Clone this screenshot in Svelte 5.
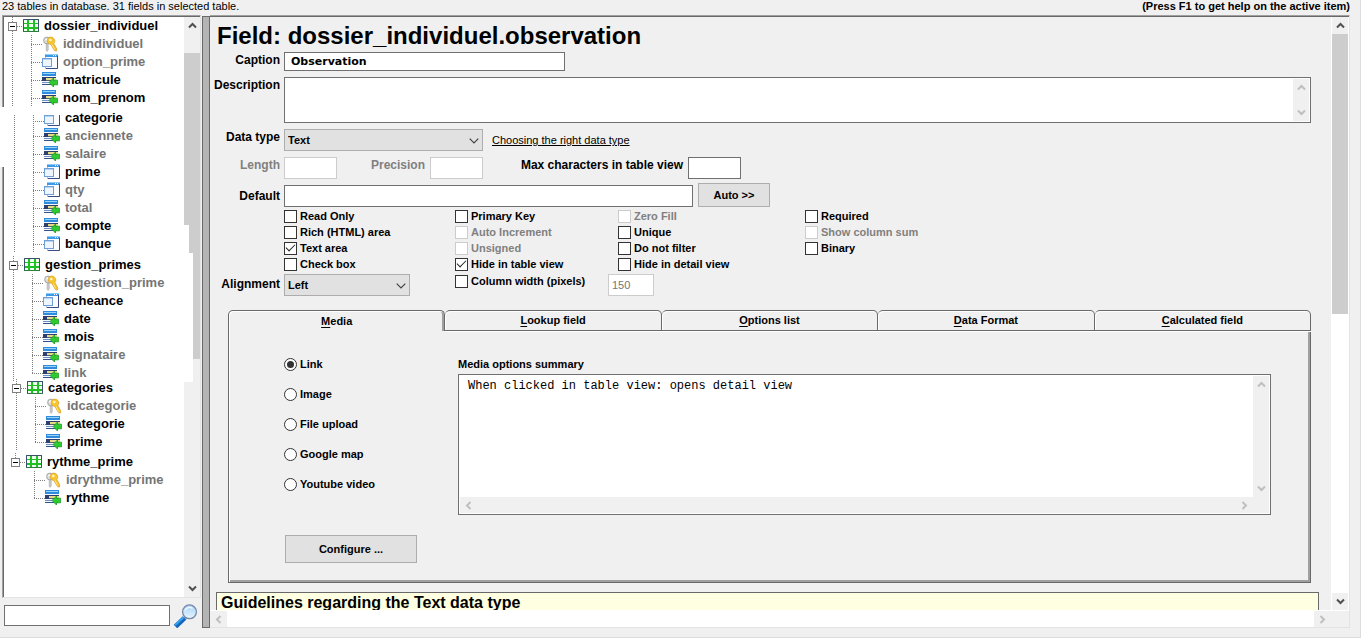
<script>
  // Field tree, in the order it is listed. `indent` shifts a group to the right.
  const groups = [
    {
      name: 'dossier_individuel',
      indent: 0,
      fields: [
        { name: 'iddindividuel', icon: 'key', dim: true },
        { name: 'option_prime', icon: 'window', dim: true },
        { name: 'matricule', icon: 'lookup' },
        { name: 'nom_prenom', icon: 'lookup' },
      ],
    },
    {
      kind: 'patch',
      indent: 2,
      fields: [
        { name: 'categorie', icon: 'window' },
        { name: 'anciennete', icon: 'lookup', dim: true },
        { name: 'salaire', icon: 'lookup', dim: true },
      ],
    },
    {
      indent: 2,
      fields: [
        { name: 'prime', icon: 'window' },
        { name: 'qty', icon: 'window', dim: true },
        { name: 'total', icon: 'lookup', dim: true },
        { name: 'compte', icon: 'lookup' },
      ],
    },
    {
      kind: 'tail',
      indent: 2,
      fields: [{ name: 'banque', icon: 'window' }],
    },
    {
      name: 'gestion_primes',
      kind: 'wide',
      indent: 1,
      closed: true,
      fields: [
        { name: 'idgestion_prime', icon: 'key', dim: true },
        { name: 'echeance', icon: 'window' },
        { name: 'date', icon: 'lookup' },
        { name: 'mois', icon: 'lookup' },
        { name: 'signataire', icon: 'lookup', dim: true },
        { name: 'link', icon: 'lookup', dim: true },
      ],
    },
    {
      name: 'categories',
      kind: 'tight',
      indent: 4,
      closed: true,
      fields: [
        { name: 'idcategorie', icon: 'key', dim: true },
        { name: 'categorie', icon: 'lookup' },
        { name: 'prime', icon: 'lookup' },
      ],
    },
    {
      name: 'rythme_prime',
      kind: 'last',
      indent: 3,
      closed: true,
      fields: [
        { name: 'idrythme_prime', icon: 'key', dim: true },
        { name: 'rythme', icon: 'lookup' },
      ],
    },
  ];

  // One entry per cell, row by row
  const flags = [
    { label: 'Read Only' },
    { label: 'Primary Key' },
    { label: 'Zero Fill', disabled: true },
    { label: 'Required' },
    { label: 'Rich (HTML) area' },
    { label: 'Auto Increment', disabled: true },
    { label: 'Unique' },
    { label: 'Show column sum', disabled: true },
    { label: 'Text area', checked: true },
    { label: 'Unsigned', disabled: true },
    { label: 'Do not filter' },
    { label: 'Binary' },
    { label: 'Check box' },
    { label: 'Hide in table view', checked: true },
    { label: 'Hide in detail view' },
  ];

  const tabs = ['Media', 'Lookup field', 'Options list', 'Data Format', 'Calculated field'];
  const mediaTypes = ['Link', 'Image', 'File upload', 'Google map', 'Youtube video'];

  let activeTab = $state('Media');
  let media = $state('Link');
</script>

{#snippet chevron(dir)}
  <svg class="chevron {dir}" width="9" height="9" viewBox="0 0 9 9" aria-hidden="true">
    <path d="M1 6.5 4.5 3 8 6.5" fill="none" stroke="currentColor" stroke-width="2" />
  </svg>
{/snippet}

{#snippet dropArrow()}
  <svg class="drop" width="10" height="6" viewBox="0 0 10 6" aria-hidden="true">
    <path d="M.7.7 5 5 9.3.7" fill="none" stroke="#444" stroke-width="1.2" />
  </svg>
{/snippet}

{#snippet fieldIcon(type)}
  <svg class="icon" width="16" height="16" viewBox="0 0 16 16" aria-hidden="true">
    {#if type === 'table'}
      <rect x="0" y="1" width="16" height="13" fill="#1fc024" />
      <g fill="#f1fbf1">
        <path d="M1 2h3v3H1zM6 2h4v3H6zM12 2h3v3h-3zM1 6h3v3H1zM6 6h4v3H6zM12 6h3v3h-3zM1 11h3v2H1zM6 11h4v2H6zM12 11h3v2h-3z" />
      </g>
      <path d="M.5 14V1.500h15V14" fill="none" stroke="#3c4f70" />
      <path d="M0 13.500h16" stroke="#2f7d3d" />
    {:else if type === 'key'}
      <circle cx="5" cy="4.5" r="3.4" fill="#dcdcdc" stroke="#a3a3a3" />
      <circle cx="4.3" cy="3.4" r="1" fill="#fff" />
      <path d="M4.2 8h2v6l-1 1.4-1-1z" fill="#c9c9c9" stroke="#a8a8a8" stroke-width=".6" />
      <path d="M5.2 4.6C5.200 1.500 8.500.2 11 1.800c2.300 1.600 2.100 4.400.8 5.700l3 5.600-.5 2-1.800-.5-3.600-6.200C7 8.400 5.200 7 5.200 4.600z" fill="#f6c62b" stroke="#dea02a" stroke-width=".8" />
      <circle cx="8.300" cy="4" r="1.300" fill="#fff6cf" />
      <path d="m10 8.500 2.800 5" stroke="#fff0a0" stroke-width=".8" />
    {:else if type === 'window'}
      <rect x="3.500" y=".5" width="12" height="14" fill="#fbfcff" stroke="#a9bfe0" />
      <rect x="3" y="0" width="13" height="3" fill="#3c9ae8" />
      <path d="M3 .5h13" stroke="#8fcbf7" />
      <path d="M11 1.500h1M13 1.500h1" stroke="#fff" />
      <path d="M15.500 2v12.500H4" fill="none" stroke="#3a4c86" />
      <rect x=".5" y="4.500" width="9" height="8" fill="#eef5fd" stroke="#6f9fd6" />
      <path d="M1 5.500h8" stroke="#b7d7f5" />
    {:else}
      <rect x="0" y="0" width="14" height="4" fill="#2f8bdc" />
      <path d="M1 1.500h12" stroke="#9ad3fa" />
      <rect x="0" y="4" width="14" height="9" fill="#f4f8fd" />
      <path d="M0 5.500h14" stroke="#2c3f70" />
      <rect x="0" y="6" width="4" height="3" fill="#2c3f70" />
      <rect x="4" y="6" width="10" height="2" fill="#e4dc86" />
      <path d="M4 8.500h9" stroke="#59606b" />
      <path d="M0 10.500h13" stroke="#6f93c8" />
      <path d="M0 12.500h13" stroke="#33518f" />
      <path d="M7 10.500 11.500 6v2.200H15.600v4.600H11.500V15z" fill="#2fca2f" stroke="#1a9a22" stroke-width=".8" />
    {/if}
  </svg>
{/snippet}

<div class="window">
  <header class="status">
    <span>23 tables in database. 31 fields in selected table.</span>
    <strong>(Press F1 to get help on the active item)</strong>
  </header>

  <div class="body">
    <aside class="sidebar">
      <div class="tree">
        <div class="groups">
          {#each groups as group}
            <section class="group {group.kind ?? ''}" style="padding-left: {group.indent}px">
              {#if group.name}
                <div class="node">
                  <span class="toggle"><span class="expander"></span></span>
                  {@render fieldIcon('table')}
                  <span class="name">{group.name}</span>
                </div>
              {/if}
              <ul class:closed={group.closed}>
                {#each group.fields as field}
                  <li class:dim={field.dim}>
                    <span class="stem"></span>
                    {@render fieldIcon(field.icon)}
                    <span class="name">{field.name}</span>
                  </li>
                {/each}
              </ul>
            </section>
          {/each}
        </div>
        <div class="vbar plain">
          <span class="arrow on">{@render chevron('up')}</span>
          <div class="track"><div class="thumb"></div></div>
          <span class="arrow on">{@render chevron('down')}</span>
        </div>
      </div>
      <div class="search">
        <input type="text" aria-label="Search fields" />
        <button type="button" aria-label="Search">
          <svg width="24" height="24" viewBox="0 0 24 24" aria-hidden="true">
            <defs>
              <linearGradient id="lens" x1="0" y1="0" x2="0" y2="1">
                <stop offset="0" stop-color="#a9d4f8" />
                <stop offset="1" stop-color="#e6f6ff" />
              </linearGradient>
            </defs>
            <path d="m10.500 12.500 2.200 2.200" stroke="#8795a8" stroke-width="2" />
            <path d="M1.500 22.500 10.500 14" stroke="#1168bd" stroke-width="5" />
            <path d="M1.200 21 9.500 13.300" stroke="#3ba3f2" stroke-width="2" />
            <circle cx="15.500" cy="7.800" r="6.900" fill="url(#lens)" stroke="#7889a8" stroke-width="1.300" />
            <path d="M11 6.500c1-3 5-4 7.500-2" fill="none" stroke="#f3fbff" stroke-width="1.200" />
          </svg>
        </button>
      </div>
    </aside>

    <div class="splitter"></div>

    <main class="editor">
      <div class="view">
        <div class="content">
          <h1>Field: dossier_individuel.observation</h1>

          <form class="form">
            <div class="row">
              <label class="label" for="caption">Caption</label>
              <input id="caption" class="caption" type="text" value="Observation" />
            </div>

            <div class="row">
              <label class="label" for="description">Description</label>
              <div class="memo description">
                <textarea id="description"></textarea>
                <div class="vbar">
                  <span class="arrow">{@render chevron('up')}</span>
                  <span class="arrow">{@render chevron('down')}</span>
                </div>
              </div>
            </div>

            <div class="row">
              <label class="label" for="datatype">Data type</label>
              <div class="select wide">
                <select id="datatype"><option>Text</option></select>
                {@render dropArrow()}
              </div>
              <a class="help" href="#datatypes">Choosing the right data type</a>
            </div>

            <div class="row">
              <label class="label off" for="length">Length</label>
              <input id="length" class="short" type="text" disabled />
              <label class="label off precision" for="precision">Precision</label>
              <input id="precision" class="short" type="text" disabled />
              <label class="label maxchars" for="maxchars">Max characters in table view</label>
              <input id="maxchars" class="short" type="text" />
            </div>

            <div class="row default">
              <label class="label" for="default">Default</label>
              <input id="default" type="text" />
              <button type="button" class="push auto">Auto &gt;&gt;</button>
            </div>

            <div class="flags">
              {#each flags as flag}
                <label class="check" class:off={flag.disabled}>
                  <input type="checkbox" checked={flag.checked} disabled={flag.disabled} />
                  {flag.label}
                </label>
              {/each}
            </div>

            <div class="row align">
              <label class="label" for="alignment">Alignment</label>
              <div class="select">
                <select id="alignment"><option>Left</option></select>
                {@render dropArrow()}
              </div>
              <label class="check colwidth">
                <input type="checkbox" />
                Column width (pixels)
              </label>
              <input class="pixels" type="text" value="150" aria-label="Column width in pixels" disabled />
            </div>
          </form>

          <div class="tabs" role="tablist">
            {#each tabs as tab}
              <button
                type="button"
                role="tab"
                class:active={activeTab === tab}
                aria-selected={activeTab === tab}
                onclick={() => (activeTab = tab)}
              ><u>{tab[0]}</u>{tab.slice(1)}</button>
            {/each}
          </div>

          <div class="panel" role="tabpanel">
            <div class="media">
              {#each mediaTypes as type}
                <label class="radio">
                  <input type="radio" name="media" value={type} bind:group={media} />
                  {type}
                </label>
              {/each}
              <button type="button" class="push configure">Configure ...</button>
            </div>
            <div class="summary">
              <label for="summary">Media options summary</label>
              <div class="memo">
                <textarea id="summary" readonly value="When clicked in table view: opens detail view"></textarea>
                <div class="vbar">
                  <span class="arrow">{@render chevron('up')}</span>
                  <span class="arrow">{@render chevron('down')}</span>
                </div>
                <div class="hbar">
                  <span class="arrow">{@render chevron('left')}</span>
                  <span class="arrow">{@render chevron('right')}</span>
                </div>
              </div>
            </div>
          </div>

          <h2>Guidelines regarding the Text data type</h2>
        </div>

        <div class="vbar page">
          <span class="arrow on">{@render chevron('up')}</span>
          <div class="track"><div class="thumb"></div></div>
          <span class="arrow on">{@render chevron('down')}</span>
        </div>
      </div>

      <div class="hbar page">
        <span class="arrow">{@render chevron('left')}</span>
        <div class="track"></div>
        <span class="arrow">{@render chevron('right')}</span>
        <span class="corner"></span>
      </div>
    </main>
  </div>
</div>

<style>
  :global(body) {
    background: #fff;
  }

  .window {
    display: flex;
    flex-direction: column;
    box-sizing: border-box;
    height: calc(100vh - 1px);
    margin-right: 1px;
    padding-bottom: 9px;
    background: #f0f0f0;
    border-right: 1px solid #dcdcdc;
    border-bottom: 1px solid #dcdcdc;
    font: bold 11px/13px "Liberation Sans", Arial, sans-serif;
    color: #000;
  }

  input,
  select,
  textarea,
  button {
    box-sizing: border-box;
    margin: 0;
    border-radius: 0;
    font: inherit;
    color: inherit;
    outline: none;
  }

  .status {
    display: flex;
    justify-content: space-between;
    height: 15px;
    padding: 0 10px 0 2px;
  }

  .status span {
    font-weight: normal;
  }

  .body {
    display: flex;
    flex: 1;
    min-height: 0;
    padding-right: 10px;
  }

  /* Sidebar */
  .sidebar {
    display: flex;
    flex-direction: column;
    width: 199px;
    padding: 0 1px 0 2px;
    flex-shrink: 0;
  }

  .tree {
    display: flex;
    flex: 1;
    min-height: 0;
    background: #fff;
    border-top: 1px solid #a0a0a0;
    border-left: 1px solid #a0a0a0;
    border-right: 1px solid #e3e3e3;
    border-bottom: 1px solid #e3e3e3;
    box-shadow: inset 1px 1px 0 #696969;
    padding: 1px 0 0 1px;
  }

  .groups {
    flex: 1;
    min-width: 0;
    font-size: 13px;
    line-height: 18px;
  }

  .group {
    position: relative;
    z-index: 1;
    background-image: repeating-linear-gradient(#808080 0 1px, transparent 1px 2px);
    background-size: 1px 100%;
    background-position: 8px 0;
    background-origin: content-box;
    background-repeat: no-repeat;
  }

  .group.patch {
    margin: 0 0 -4px -4px;
    padding-bottom: 4px;
    border-top: 8px solid #fff;
    border-left: 4px solid #fff;
  }

  .group.patch li:first-child {
    height: 12px;
    align-items: flex-end;
  }

  .group.patch li:first-child .stem {
    height: 12px;
  }

  .group.patch li:first-child .icon {
    clip-path: inset(4px 0 0 0);
  }

  /* Lies under the group above it, over the scroll bar */
  .group.tail {
    z-index: 0;
    margin: -10px -5px 0 0;
    padding-top: 10px;
    background-color: #fff;
  }

  .group.wide {
    margin-right: -9px;
    padding-top: 3px;
    background-color: #fff;
  }

  .group.tight {
    margin-top: -3px;
  }

  .group.last {
    margin-top: 2px;
    background-size: 1px 9px;
  }

  .node,
  li {
    display: flex;
    align-items: center;
    height: 18px;
  }

  ul {
    margin: 0;
    padding: 0 0 0 27px;
    list-style: none;
  }

  .toggle {
    display: flex;
    align-items: center;
    width: 15px;
    height: 18px;
    margin-left: 4px;
    background: repeating-linear-gradient(90deg, #808080 0 1px, transparent 1px 2px) 9px 9px / 6px 1px no-repeat;
  }

  .expander {
    box-sizing: border-box;
    width: 9px;
    height: 9px;
    border: 1px solid #808080;
    background: linear-gradient(#000, #000) center / 5px 1px no-repeat #fff;
  }

  .stem {
    width: 11px;
    height: 18px;
    background:
      repeating-linear-gradient(#808080 0 1px, transparent 1px 2px) 0 0 / 1px 100% no-repeat,
      repeating-linear-gradient(90deg, #808080 0 1px, transparent 1px 2px) 0 50% / 11px 1px no-repeat;
  }

  .closed li:last-child .stem {
    background-size: 1px 50%, 11px 1px;
  }

  .icon {
    flex-shrink: 0;
  }

  .name {
    margin-left: 5px;
  }

  .dim {
    color: #757575;
  }

  .search {
    display: flex;
    align-items: center;
    height: 30px;
    padding-left: 2px;
  }

  .search input {
    flex: 1;
    min-width: 0;
    height: 21px;
    margin-top: 5px;
  }

  .search button {
    display: flex;
    margin: 6px 3px 0 4px;
    padding: 0;
    background: none;
    border: 0;
  }

  .splitter {
    box-sizing: border-box;
    width: 8px;
    margin-top: 1px;
    background: #b4b4b4;
    border: 1px solid #696969;
    flex-shrink: 0;
  }

  /* Scroll bars */
  .vbar {
    display: flex;
    flex-direction: column;
    justify-content: space-between;
    width: 16px;
    flex-shrink: 0;
    background: #f0f0f0;
  }

  .hbar {
    display: flex;
    justify-content: space-between;
    height: 16px;
    background: #f0f0f0;
  }

  .arrow {
    display: flex;
    align-items: center;
    justify-content: center;
    width: 17px;
    height: 17px;
    flex-shrink: 0;
    background: #f0f0f0;
    color: #bfbfbf;
  }

  .vbar .arrow {
    width: 16px;
  }

  .hbar .arrow {
    height: 16px;
  }

  .arrow.on {
    color: #505050;
  }

  .chevron.down {
    transform: rotate(180deg);
  }

  .chevron.left {
    transform: rotate(-90deg);
  }

  .chevron.right {
    transform: rotate(90deg);
  }

  .track {
    flex: 1;
  }

  .page .track {
    background: #fff;
  }

  .thumb {
    height: 50%;
    background: #cdcdcd;
  }

  .plain .track {
    display: flex;
    flex-direction: column;
    padding-top: 19px;
  }

  .plain .thumb {
    height: 58%;
  }

  /* Editor */
  .editor {
    display: flex;
    flex-direction: column;
    flex: 1;
    min-width: 0;
    border-top: 1px solid #a0a0a0;
    border-right: 1px solid #e3e3e3;
    border-bottom: 1px solid #e3e3e3;
    box-shadow: inset 0 1px 0 #696969;
    padding-top: 1px;
  }

  .view {
    display: flex;
    flex: 1;
    min-height: 0;
    overflow: hidden;
    border-bottom: 1px solid #fff;
  }

  .content {
    flex: 1;
    min-width: 0;
    overflow: hidden;
    padding: 5px 20px 0 0;
  }

  .vbar.page {
    border-left: 1px solid #fff;
    border-right: 1px solid #fff;
  }

  .hbar.page .corner {
    width: 18px;
  }

  h1 {
    margin: 0 0 2px 7px;
    font-size: 24px;
    line-height: 28px;
  }

  .form {
    display: flex;
    flex-direction: column;
    gap: 6px;
  }

  .row {
    display: flex;
    align-items: flex-start;
  }

  .label {
    width: 70px;
    margin-right: 4px;
    flex-shrink: 0;
    font-size: 12px;
    line-height: 17px;
    text-align: right;
  }

  .label.precision {
    width: 88px;
    margin-right: 5px;
  }

  .label.maxchars {
    width: 200px;
    margin-right: 5px;
  }

  .off {
    color: #808080;
  }

  input[type="text"] {
    height: 22px;
    padding: 0 4px;
    background: #fff;
    border: 1px solid #707070;
  }

  input[type="text"]:disabled {
    border-color: #ccc;
    color: #757575;
    font-weight: normal;
  }

  .search input[type="text"] {
    height: 21px;
  }

  input[type="text"].caption {
    width: 281px;
    height: 19px;
    padding: 0 6px;
    font-family: "DejaVu Sans", Verdana, sans-serif;
  }

  input.short {
    width: 53px;
  }

  input[type="text"].pixels {
    width: 46px;
    padding: 0 3px;
  }

  #default {
    width: 409px;
  }

  .memo {
    display: grid;
    grid-template-columns: 1fr 16px;
    padding: 1px;
    background: #fff;
    border: 1px solid #707070;
  }

  .memo textarea {
    padding: 0;
    border: 0;
    background: #fff;
    resize: none;
    overflow: hidden;
  }

  .memo .hbar {
    grid-column: 1 / 3;
    padding-right: 16px;
  }

  .description {
    flex: 1;
  }

  .description textarea {
    height: 42px;
  }

  .select {
    position: relative;
    width: 126px;
  }

  .select.wide {
    width: 199px;
  }

  select {
    display: block;
    width: 100%;
    height: 22px;
    padding: 0 3px;
    appearance: none;
    background: #e1e1e1;
    border: 1px solid #adadad;
  }

  .drop {
    position: absolute;
    top: 9px;
    right: 4px;
    pointer-events: none;
  }

  .help {
    margin-left: 9px;
    font-weight: normal;
    line-height: 22px;
    color: #000;
  }

  .push {
    padding: 0;
    background: #e1e1e1;
    border: 1px solid #adadad;
  }

  .row.default {
    align-items: flex-end;
    margin-top: -2px;
  }

  .default .label {
    line-height: 22px;
  }

  .auto {
    width: 72px;
    height: 24px;
    margin-left: 5px;
  }

  .flags {
    display: grid;
    grid-template-columns: 171px 163px 187px 1fr;
    grid-auto-rows: 16px;
    margin: -5px 0 -4px 74px;
  }

  .check,
  .radio {
    display: flex;
    align-items: center;
    gap: 3px;
    white-space: nowrap;
  }

  .align .label {
    line-height: 20px;
  }

  .colwidth {
    width: 153px;
    height: 14px;
    margin-left: 45px;
  }

  input[type="checkbox"],
  input[type="radio"] {
    display: grid;
    place-content: center;
    width: 13px;
    height: 13px;
    appearance: none;
    background: #fff;
    border: 1px solid #333;
  }

  input[type="checkbox"]:disabled {
    border-color: #ccc;
  }

  input[type="checkbox"]:checked::before {
    content: '';
    width: 8px;
    height: 4px;
    margin-bottom: 3px;
    border-left: 1px solid #222;
    border-bottom: 1px solid #222;
    transform: rotate(-45deg);
  }

  input[type="radio"] {
    border-radius: 50%;
  }

  input[type="radio"]:checked::before {
    content: '';
    width: 7px;
    height: 7px;
    border-radius: 50%;
    background: #333;
  }

  /* Tabs */
  .tabs {
    display: flex;
    margin: 14px 0 0 18px;
  }

  .tabs button {
    flex: 1 1 0;
    height: 21px;
    padding: 0;
    background: #f0f0f0;
    border: 1px solid #696969;
    border-left: 0;
    border-radius: 5px 5px 0 0;
    box-shadow: inset 1px 1px 0 #fff, 0 1px 0 #fff;
  }

  .tabs button:first-child {
    border-left: 1px solid #696969;
  }

  .tabs button.active {
    padding-top: 1px;
    border-bottom: 0;
    box-shadow: inset 1px 1px 0 #fff, inset -2px 0 0 #a0a0a0;
  }

  u {
    text-underline-offset: 2px;
  }

  .panel {
    display: flex;
    margin-left: 18px;
    padding: 18px 39px 19px 55px;
    border: 1px solid #696969;
    border-top: 0;
    box-shadow: inset 1px 0 0 #fff, inset -2px -2px 0 #a0a0a0;
  }

  .media {
    display: flex;
    flex-direction: column;
    width: 174px;
    flex-shrink: 0;
  }

  .radio {
    height: 30px;
  }

  .configure {
    width: 132px;
    height: 28px;
    margin: 36px 0 0 1px;
  }

  .summary {
    flex: 1;
    min-width: 0;
    padding-top: 5px;
  }

  .summary label {
    display: block;
    line-height: 20px;
  }

  .summary textarea {
    height: 121px;
    padding: 3px 8px;
    font: 12px/14px "Liberation Mono", "Courier New", monospace;
  }

  h2 {
    margin: 9px -8px 0 6px;
    padding: 1px 4px 10px;
    background: #ffffe1;
    border: 1px solid #696969;
    font-size: 16px;
    line-height: 18px;
  }
</style>
